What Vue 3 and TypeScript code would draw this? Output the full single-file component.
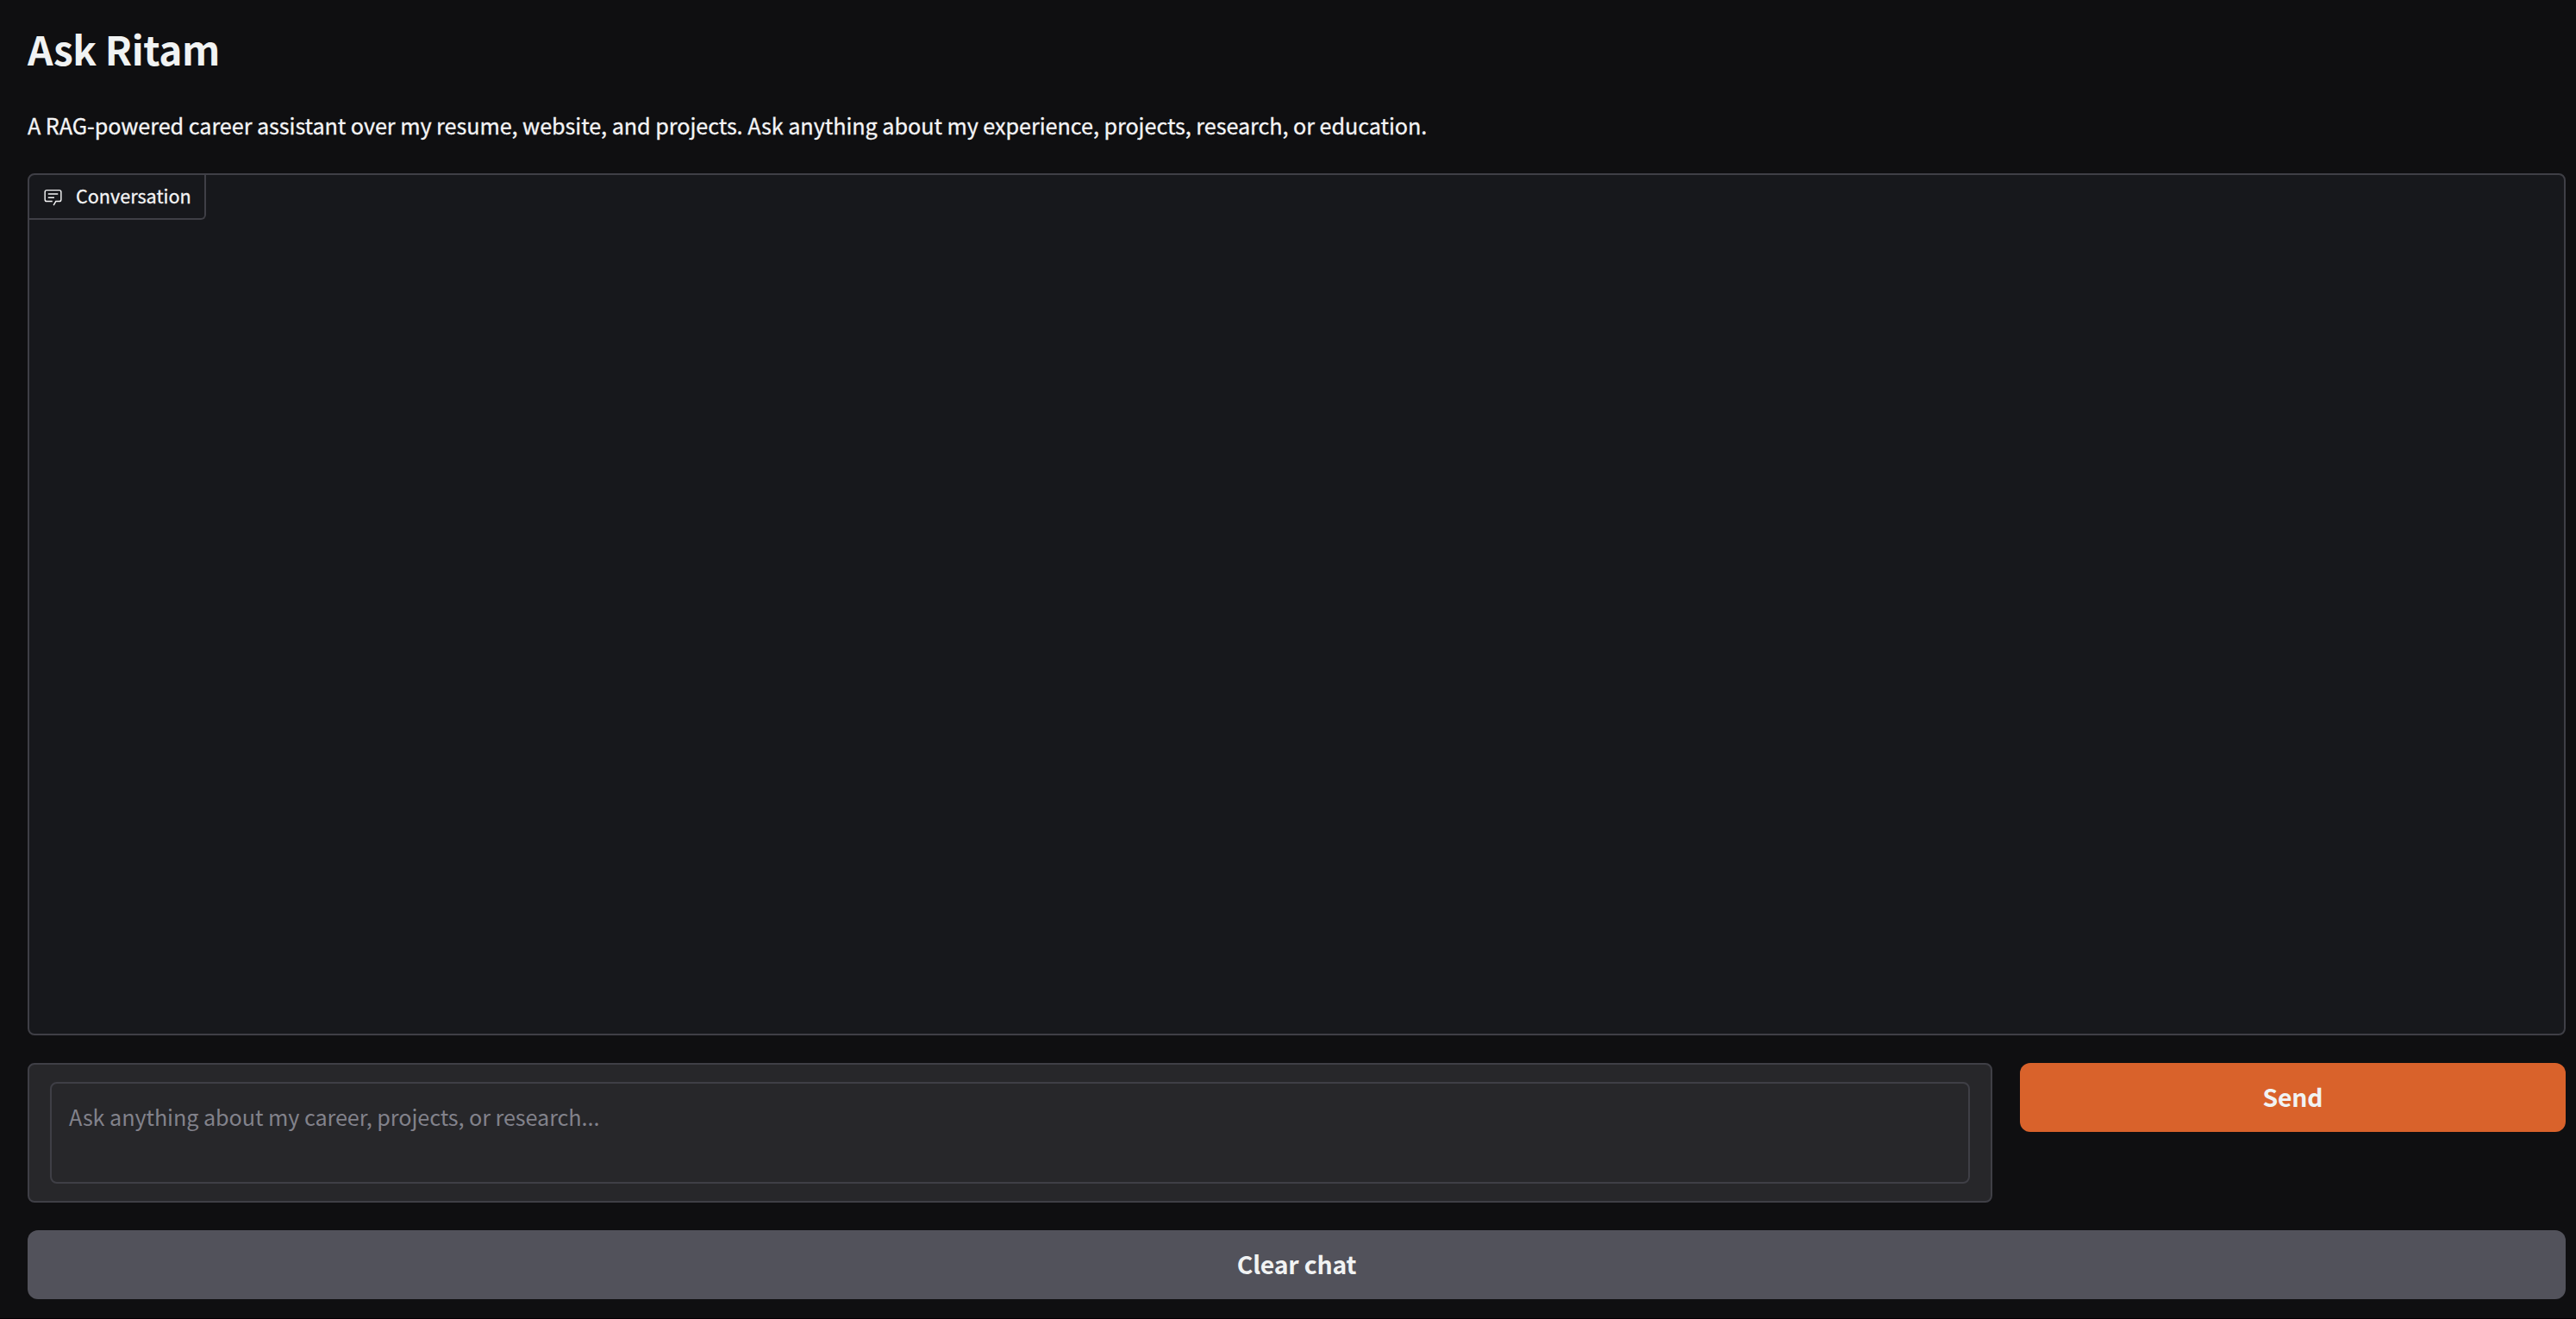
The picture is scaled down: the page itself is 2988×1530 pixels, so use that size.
<script setup lang="ts">
import { ref } from 'vue'

const draft = ref('')
</script>

<template>
  <main class="app">
    <h1>Ask Ritam</h1>
    <p class="intro">A RAG-powered career assistant over my resume, website, and projects. Ask anything about my experience, projects, research, or education.</p>

    <section class="chat">
      <div class="label">
        <svg viewBox="0 0 32 32" aria-hidden="true">
          <path d="M17.74 30L16 29l4-7h6a2 2 0 0 0 2-2V8a2 2 0 0 0-2-2H6a2 2 0 0 0-2 2v12a2 2 0 0 0 2 2h9v2H6a4 4 0 0 1-4-4V8a4 4 0 0 1 4-4h20a4 4 0 0 1 4 4v12a4 4 0 0 1-4 4h-4.84Z" />
          <path d="M8 10h16v2H8zm0 6h10v2H8z" />
        </svg>
        <span>Conversation</span>
      </div>
    </section>

    <div class="row">
      <div class="field">
        <textarea v-model="draft" placeholder="Ask anything about my career, projects, or research..."></textarea>
      </div>
      <button class="send" type="button">Send</button>
    </div>

    <button class="clear" type="button" @click="draft = ''">Clear chat</button>
  </main>
</template>

<style>
html,
body {
  background: #0f0f11;
}
</style>

<style scoped>
.app {
  box-sizing: border-box;
  height: 1530px;
  padding: 25px 12px 0 32px;
  display: flex;
  flex-direction: column;
  overflow: hidden;
  border-bottom: 1px solid #050004;
  background: #0f0f11;
  color: #f4f4f5;
  font-family: "Noto Sans CJK SC", "Noto Sans", sans-serif;
}

h1 {
  margin: 0;
  height: 62px;
  line-height: 62px;
  font-size: 46px;
  font-weight: 700;
  letter-spacing: -0.4px;
  color: #f1f3f3;
}

.intro {
  margin: 37px 0 0;
  height: 42px;
  line-height: 42px;
  font-size: 25.2px;
  letter-spacing: -0.055px;
  white-space: nowrap;
  -webkit-text-stroke: 0.3px currentColor;
}

.chat {
  box-sizing: border-box;
  flex: none;
  height: 1000px;
  margin-top: 35px;
  border: 2px solid #3f3f46;
  border-radius: 8px;
  background: #17181c;
}

.label {
  box-sizing: border-box;
  width: 205px;
  height: 52px;
  padding-left: 16px;
  display: flex;
  align-items: center;
  border: solid #3f3f46;
  border-width: 0 2px 2px 0;
  border-bottom-right-radius: 6px;
  font-size: 21.6px;
  line-height: 1;
}

.label svg {
  width: 23px;
  height: 23px;
  margin-right: 15px;
  fill: currentColor;
}

.label span {
  padding-bottom: 2px;
  -webkit-text-stroke: 0.3px currentColor;
}

.row {
  display: flex;
  align-items: flex-start;
  gap: 32px;
  margin-top: 32px;
}

.field {
  box-sizing: border-box;
  width: 2279px;
  height: 162px;
  padding: 20px 24px;
  border: 2px solid #3f3f46;
  border-radius: 8px;
  background: #27272a;
}

textarea {
  box-sizing: border-box;
  display: block;
  width: 100%;
  height: 118px;
  margin: 0;
  padding: 17px 20px;
  border: 2px solid #3f3f46;
  border-radius: 8px;
  outline: none;
  resize: none;
  background: #27272a;
  color: #f4f4f5;
  font-family: inherit;
  font-size: 25.2px;
  letter-spacing: -0.07px;
  line-height: 42px;
}

textarea::placeholder {
  color: #82828b;
}

button {
  box-sizing: border-box;
  height: 80px;
  padding: 0 0 3px;
  border: 0;
  border-radius: 12px;
  color: #f1f3f3;
  font-family: inherit;
  font-size: 28.4px;
  font-weight: 700;
  letter-spacing: -0.2px;
  line-height: 77px;
}

.send {
  flex: 1;
  background: #d9622b;
}

.clear {
  flex: none;
  margin-top: 32px;
  background: #52525b;
}
</style>
